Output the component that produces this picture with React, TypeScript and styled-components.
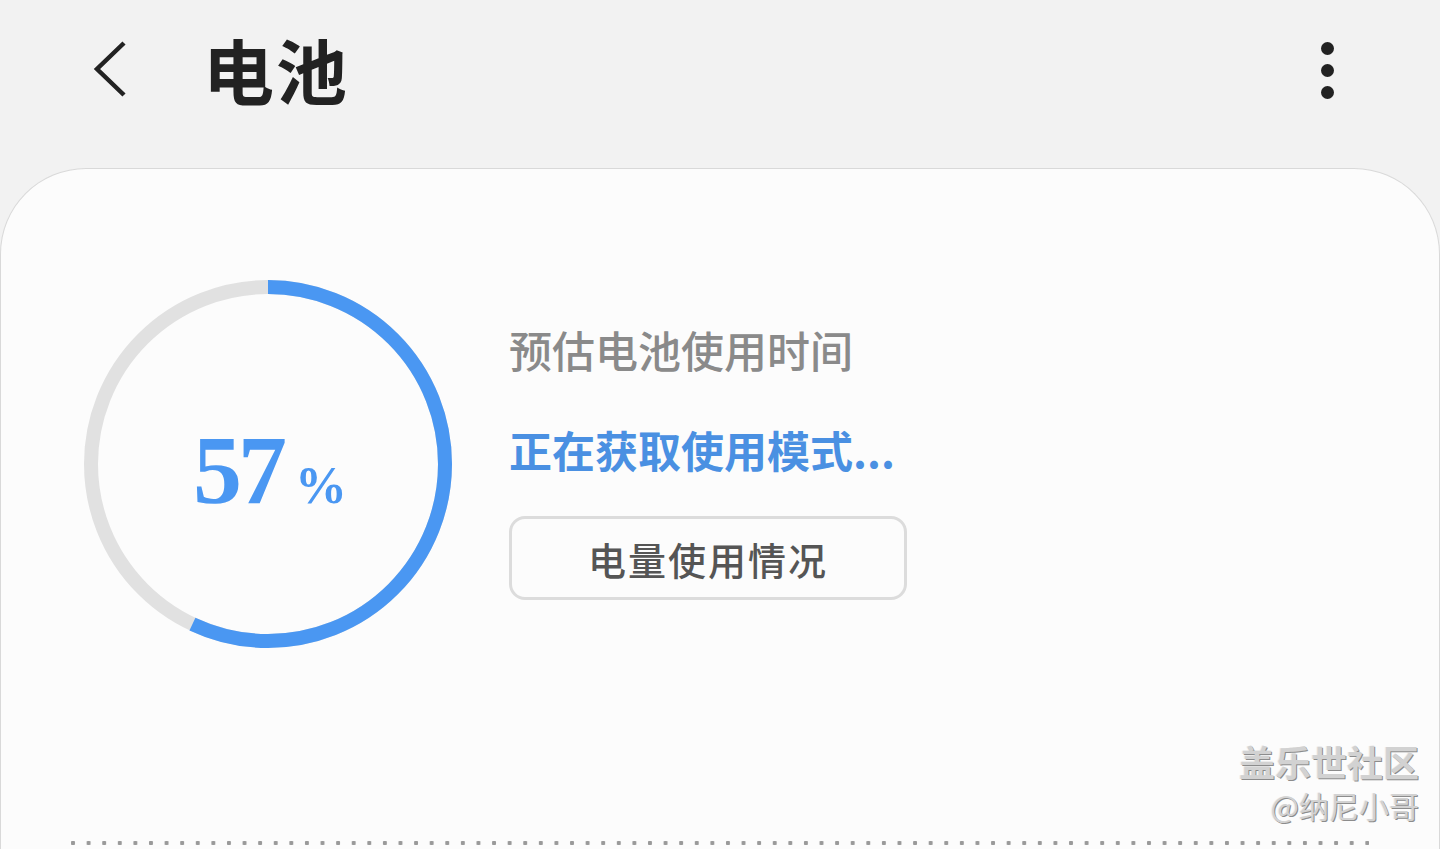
import styled, { createGlobalStyle } from 'styled-components';

const GlobalStyle = createGlobalStyle`
  html, body {
    margin: 0;
    padding: 0;
    background: #f2f2f2;
    height: 849px;
    overflow: hidden;
  }
  body {
    font-family: "Noto Sans CJK SC", "Noto Sans", sans-serif;
  }
`;

const BATTERY = 57;
const R = 177;
const C = 2 * Math.PI * R;

const BatteryRing = ({ level }: { level: number }) => (
  <RingWrap>
    <svg width="368" height="368" viewBox="0 0 368 368">
      <circle cx="184" cy="184" r={R} fill="none" stroke="#e1e1e1" strokeWidth="14" />
      <circle
        cx="184"
        cy="184"
        r={R}
        fill="none"
        stroke="#4a97f2"
        strokeWidth="14"
        strokeDasharray={`${(C * level) / 100} ${C}`}
        transform="rotate(-90 184 184)"
      />
    </svg>
    <Percent>
      <Num>{level}</Num>
      <Sign>%</Sign>
    </Percent>
  </RingWrap>
);

export default function App() {
  return (
    <Page>
      <GlobalStyle />
      <Header>
        <BackButton aria-label="back">
          <svg width="40" height="60" viewBox="0 0 40 60">
            <polyline points="33,3 6,29 33,55" fill="none" stroke="#222" strokeWidth="4.5" />
          </svg>
        </BackButton>
        <Title>电池</Title>
        <MoreButton aria-label="more">
          <Dot />
          <Dot />
          <Dot />
        </MoreButton>
      </Header>
      <Card>
        <Summary>
          <BatteryRing level={BATTERY} />
          <Info>
            <Label>预估电池使用时间</Label>
            <Status>正在获取使用模式...</Status>
            <UsageButton>电量使用情况</UsageButton>
          </Info>
        </Summary>
        <Dotted />
        <Watermark>
          <WmTitle>盖乐世社区</WmTitle>
          <WmUser>@纳尼小哥</WmUser>
        </Watermark>
      </Card>
    </Page>
  );
}

const Page = styled.div`
  width: 1440px;
  height: 849px;
  display: flex;
  flex-direction: column;
  overflow: hidden;
`;

const Header = styled.div`
  height: 168px;
  flex-shrink: 0;
  display: flex;
  align-items: flex-start;
  padding: 0 0 0 91px;
  box-sizing: border-box;
`;

const BackButton = styled.div`
  margin-top: 40px;
  width: 40px;
  height: 60px;
`;

const Title = styled.div`
  margin-left: 72px;
  margin-top: 18px;
  font-size: 71px;
  line-height: 100px;
  font-weight: 700;
  color: #222;
  letter-spacing: 2px;
`;

const MoreButton = styled.div`
  margin-left: auto;
  margin-right: 106px;
  margin-top: 42px;
  display: flex;
  flex-direction: column;
  gap: 9px;
`;

const Dot = styled.span`
  width: 13px;
  height: 13px;
  border-radius: 50%;
  background: #222;
`;

const Card = styled.div`
  position: relative;
  flex: 1;
  background: #fcfcfc;
  border: 1px solid #d9d9d9;
  border-bottom: none;
  border-radius: 86px 86px 0 0;
  display: flex;
  flex-direction: column;
`;

const Summary = styled.div`
  display: flex;
  align-items: flex-start;
  padding: 111px 0 0 83px;
  gap: 57px;
`;

const RingWrap = styled.div`
  position: relative;
  width: 368px;
  height: 368px;
  flex-shrink: 0;
`;

const Percent = styled.div`
  position: absolute;
  inset: 0;
  display: flex;
  align-items: baseline;
  justify-content: center;
  padding-top: 134px;
  padding-left: 4px;
  color: #4a97f2;
  font-family: "Liberation Serif", "DejaVu Serif", serif;
  font-weight: 700;
`;

const Num = styled.span`
  font-size: 98px;
  letter-spacing: -4px;
`;

const Sign = styled.span`
  font-size: 52px;
  margin-left: 12px;
`;

const Info = styled.div`
  display: flex;
  flex-direction: column;
  align-items: flex-start;
  padding-top: 39px;
`;

const Label = styled.div`
  font-size: 43px;
  line-height: 60px;
  color: #8a8a8a;
  font-weight: 500;
`;

const Status = styled.div`
  margin-top: 40px;
  font-size: 43px;
  line-height: 60px;
  color: #4a90e2;
  font-weight: 700;
`;

const UsageButton = styled.div`
  margin-top: 37px;
  width: 398px;
  height: 84px;
  box-sizing: border-box;
  border: 3px solid #dcdcdc;
  border-radius: 16px;
  display: flex;
  align-items: center;
  justify-content: center;
  font-size: 38px;
  letter-spacing: 2px;
  color: #555;
  font-weight: 500;
`;

const Dotted = styled.div`
  margin: auto 70px 3px 70px;
  height: 6px;
  background-image: radial-gradient(circle, #9a9a9a 2px, transparent 2.5px);
  background-size: 15.6px 6px;
  background-position: -5.8px 0;
  background-repeat: repeat-x;
`;

const Watermark = styled.div`
  position: absolute;
  right: 20px;
  bottom: 27px;
  display: flex;
  flex-direction: column;
  align-items: flex-end;
  gap: 7px;
  color: #d2d2d2;
  text-shadow: 1px 1px 0 #8c8c8c, -1px 0 0 #eee;
`;

const WmTitle = styled.div`
  font-size: 36px;
  line-height: 40px;
  font-weight: 700;
`;

const WmUser = styled.div`
  font-size: 30px;
  line-height: 34px;
  font-weight: 400;
`;
